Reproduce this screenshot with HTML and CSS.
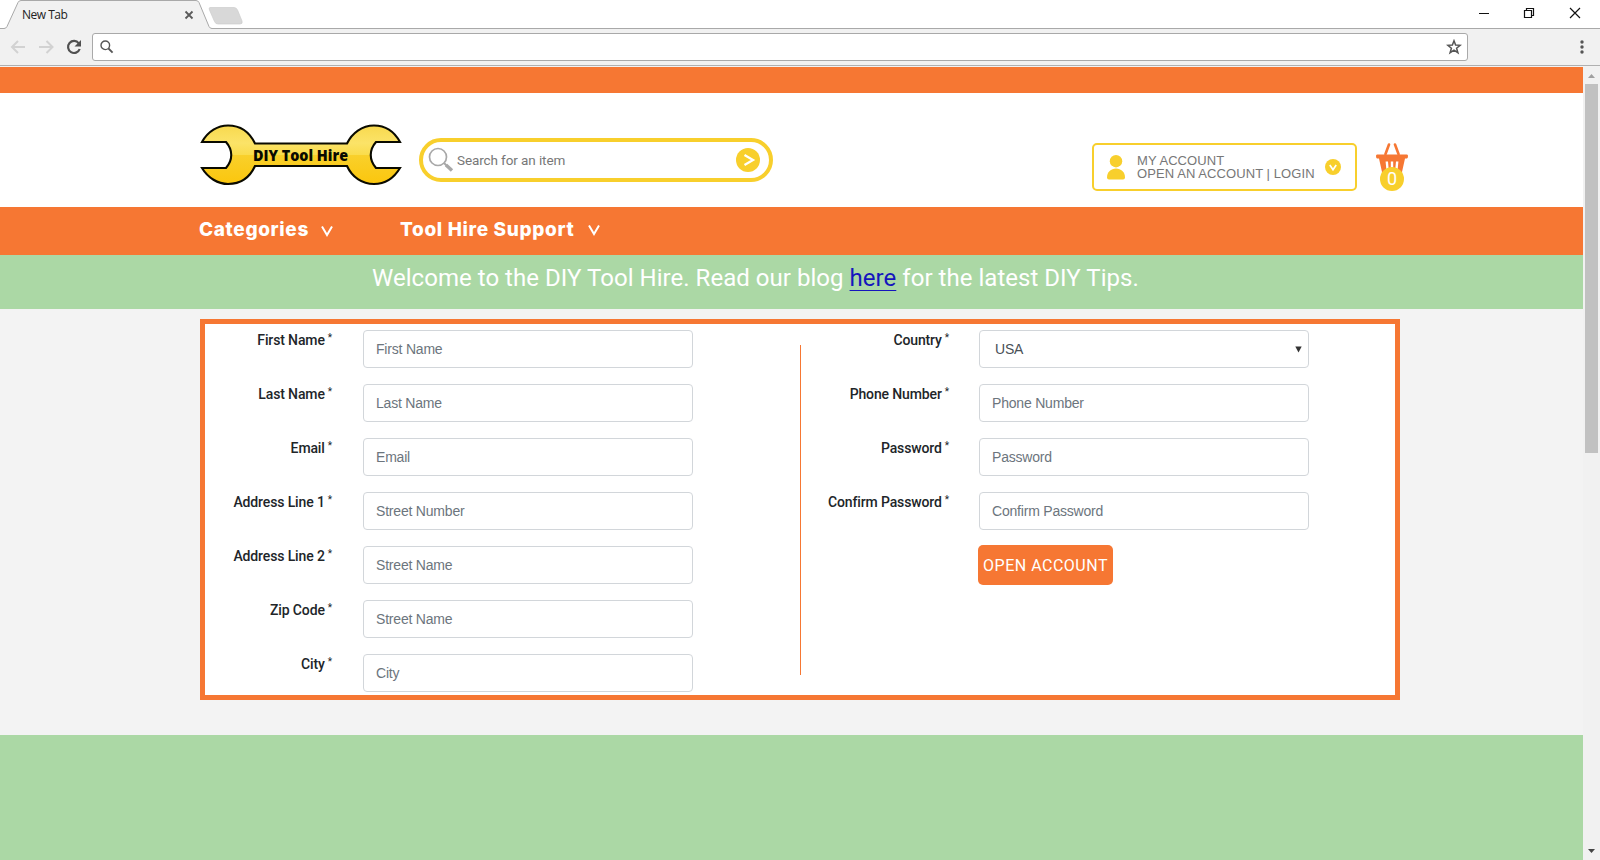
FILE: index.html
```html
<!DOCTYPE html>
<html lang="en">
<head>
<meta charset="utf-8">
<title>DIY Tool Hire</title>
<link rel="stylesheet" href="styles.css">
</head>
<body>
<div class="window">
  <header class="tabs">
    <svg class="tab-shape" width="250" height="29" viewBox="0 0 250 29">
      <path d="M0 28.5H4Q6 28.5 7 26.5L18 2.500Q19 .5 21 .5H196Q198 .5 199 2.500L209 26.500Q210 28.500 212 28.500H250V29H0Z" fill="#f1f1f1"/>
      <path d="M0 28.500H4Q6 28.500 7 26.500L18 2.500Q19 .5 21 .5H196Q198 .5 199 2.500L209 26.500Q210 28.500 212 28.500H250" fill="none" stroke="#a9a9a9"/>
      <path d="M210 7.500H234Q236.500 7.500 237.500 10L242 21Q243 24 240 24H218Q215.500 24 214.500 21.500L209.500 10Q208.500 7.500 210 7.500Z" fill="#d8d8d8" stroke="#cdcdcd" stroke-width=".7"/>
      <path d="M185.500 11.500l7 7M192.500 11.500l-7 7" stroke="#5a5a5a" stroke-width="1.800" fill="none"/>
    </svg>
    <span class="tab-title">New Tab</span>
    <svg class="win-buttons" width="110" height="28" viewBox="0 0 110 28" fill="none" stroke="#111">
      <path d="M4 13.500H14"/>
      <path d="M49.500 10.500H56.500V17.500H49.500ZM51.500 10.500V8.500H58.500V15.500H56.500" stroke-width="1.200"/>
      <path d="M95 8L105 18M105 8L95 18" stroke-width="1.200"/>
    </svg>
  </header>
  <div class="toolbar">
    <svg width="92" height="36" viewBox="0 0 92 36" fill="none">
      <path d="M25 18H12.500M18 12L12 18L18 24" stroke="#d2d2d2" stroke-width="2"/>
      <path d="M39 18H52M46.500 12L52.500 18L46.500 24" stroke="#d2d2d2" stroke-width="2"/>
      <path d="M78.800 14.300A6 6 0 1 0 79.700 20" stroke="#505050" stroke-width="2.200"/>
      <path d="M81 11V17.500H74.500Z" fill="#505050"/>
    </svg>
    <div class="address">
      <svg width="14" height="14" viewBox="0 0 14 14" fill="none" stroke="#555"><circle cx="5.300" cy="5.300" r="4.300" stroke-width="1.400"/><path d="M8.500 8.500L12.600 12.600" stroke-width="1.800"/></svg>
      <svg width="16" height="16" viewBox="0 0 16 16" fill="none" stroke="#555" stroke-width="1.500"><path d="M8 1.800L9.600 6.100L14.200 6.300L10.600 9.200L11.900 13.700L8 11.100L4.100 13.700L5.400 9.200L1.800 6.300L6.400 6.100Z"/></svg>
    </div>
    <svg class="menu" width="6" height="16" viewBox="0 0 6 16" fill="#555"><circle cx="3" cy="3" r="1.700"/><circle cx="3" cy="8" r="1.700"/><circle cx="3" cy="13" r="1.700"/></svg>
  </div>

  <div class="viewport">
    <main class="page">
      <div class="strip"></div>
      <div class="masthead">
        <svg class="logo" width="202" height="62" viewBox="0 0 202 62">
          <defs>
            <linearGradient id="gold" x1="0" y1="0" x2="0" y2="1">
              <stop offset="0" stop-color="#f8d94e"/><stop offset=".3" stop-color="#fbe368"/><stop offset=".5" stop-color="#fadc4c"/><stop offset=".51" stop-color="#f9d02b"/><stop offset="1" stop-color="#fbc60d"/>
            </linearGradient>
          </defs>
          <path d="M2 18C8 7 18 1.500 28 1.500C41 1.500 50 9 55 19.500H147C152 9 162 1.500 174 1.500C185 1.500 194 7 200 18H176C169 26 169 36 176 44H200C194 54 185 60 174 60C162 60 152 53 147 42H55C50 53 41 60 28 60C18 60 8 54 2 44H26C33 36 33 26 26 18Z" fill="url(#gold)" stroke="#0a0a00" stroke-width="2.100"/>
          <text x="53" y="37" class="logo-text" textLength="95" lengthAdjust="spacingAndGlyphs">DIY Tool Hire</text>
        </svg>
        <div class="search">
          <svg width="26" height="26" viewBox="0 0 26 26" fill="none" stroke="#a8a8a8"><circle cx="10" cy="10" r="8.500" stroke-width="1.700"/><path d="M16 16L18.500 18.500" stroke-width="2"/><path d="M18 18L24 23.500" stroke-width="3.400"/></svg>
          <span class="search-label">Search for an item</span>
          <svg width="24" height="24" viewBox="0 0 24 24"><circle cx="12" cy="12" r="12" fill="#f8cf2c"/><path d="M8.500 7L17 12L8.500 17" fill="none" stroke="#fff" stroke-width="2.300"/></svg>
        </div>
        <div class="account">
          <svg width="18" height="25" viewBox="0 0 18 25" fill="#f8cf2c"><circle cx="9" cy="6.200" r="6.200"/><path d="M0 22.500C0 17 4 13.500 9 13.500S18 17 18 22.500Q18 24.500 16 24.500H2Q0 24.500 0 22.500Z"/></svg>
          <div class="account-text"><span>MY ACCOUNT</span><span>OPEN AN ACCOUNT | LOGIN</span></div>
          <svg width="16" height="16" viewBox="0 0 16 16"><circle cx="8" cy="8" r="8" fill="#f8cf2c"/><path d="M4.800 6L8 10.800L11.200 6" fill="none" stroke="#fff" stroke-width="1.700"/></svg>
        </div>
        <svg class="basket" width="32" height="48" viewBox="0 0 32 48">
          <path d="M13 1.500L9.500 11M19 1.500L22.500 11" stroke="#f67733" stroke-width="2.600" stroke-linecap="round" fill="none"/>
          <path d="M1 11.500H31Q32 11.500 32 13Q32 15 31 15.500H29L26 29H6L3 15.500H1Q0 15 0 13Q0 11.500 1 11.500Z" fill="#f67733"/>
          <path d="M10.800 18.500L11.500 26M16 18.500V26M21.200 18.500L20.500 26" stroke="#fff" stroke-width="2.400"/>
          <circle cx="16" cy="36" r="12" fill="#f8cf2c"/>
          <text x="16" y="42" class="count" text-anchor="middle">0</text>
        </svg>
      </div>
      <nav class="nav">
        <span class="nav-a">Categories</span>
        <svg class="chev-a" width="12" height="12" viewBox="0 0 12 12"><path d="M1 1.500L6 10L11 1.500" fill="none" stroke="#fff" stroke-width="2"/></svg>
        <span class="nav-b">Tool Hire Support</span>
        <svg class="chev-b" width="12" height="12" viewBox="0 0 12 12"><path d="M1 1.500L6 10L11 1.500" fill="none" stroke="#fff" stroke-width="2"/></svg>
      </nav>
      <div class="welcome"><span>Welcome to the DIY Tool Hire. Read our blog <a href="#">here</a> for the latest DIY Tips.</span></div>
      <section class="content">
        <form class="panel">
          <div class="col left">
            <div class="row"><label>First Name <sup>*</sup></label><input placeholder="First Name"></div>
            <div class="row"><label>Last Name <sup>*</sup></label><input placeholder="Last Name"></div>
            <div class="row"><label>Email <sup>*</sup></label><input placeholder="Email"></div>
            <div class="row"><label>Address Line 1 <sup>*</sup></label><input placeholder="Street Number"></div>
            <div class="row"><label>Address Line 2 <sup>*</sup></label><input placeholder="Street Name"></div>
            <div class="row"><label>Zip Code <sup>*</sup></label><input placeholder="Street Name"></div>
            <div class="row"><label>City <sup>*</sup></label><input placeholder="City"></div>
          </div>
          <div class="divider"></div>
          <div class="col right">
            <div class="row"><label>Country <sup>*</sup></label><div class="select"><span>USA</span><svg width="7" height="7" viewBox="0 0 7 7"><path d="M.3 .5H6.700L3.500 6.500Z" fill="#333"/></svg></div></div>
            <div class="row"><label>Phone Number <sup>*</sup></label><input placeholder="Phone Number"></div>
            <div class="row"><label>Password <sup>*</sup></label><input placeholder="Password"></div>
            <div class="row"><label>Confirm Password <sup>*</sup></label><input placeholder="Confirm Password"></div>
            <button type="button" class="open">OPEN ACCOUNT</button>
          </div>
        </form>
      </section>
    </main>
    <div class="scrollbar">
      <svg width="7" height="4" viewBox="0 0 7 4"><path d="M0 4L3.500 0L7 4Z" fill="#a0a0a0"/></svg>
      <div class="thumb"></div>
      <svg class="down" width="7" height="4" viewBox="0 0 7 4"><path d="M0 0L3.500 4L7 0Z" fill="#444"/></svg>
    </div>
  </div>
</div>
</body>
</html>
```
FILE: styles.css
```css
* { box-sizing: border-box; }
body { margin: 0; font-family: Roboto, "Liberation Sans", sans-serif; }
svg { display: block; flex: none; }
.window { width: 1600px; height: 860px; overflow: hidden; display: flex; flex-direction: column; }

.tabs { height: 29px; flex: none; display: flex; justify-content: space-between; position: relative; background: #fff; border-bottom: 1px solid #a9a9a9; }
.tab-shape { height: 29px; margin-bottom: -1px; position: relative; }
.tab-title { position: absolute; left: 22px; top: 6px; font: 12px/17px "Open Sans", "Noto Sans", sans-serif; letter-spacing: -.5px; color: #222; }
.win-buttons { margin-right: 15px; }
.toolbar { height: 37px; flex: none; display: flex; background: #f1f1f1; border-bottom: 1px solid #b0b0b0; }
.address { width: 1376px; height: 28px; margin-top: 4px; padding: 0 5px 0 7px; background: #fff; border: 1px solid #a9a9a9; border-radius: 3px; display: flex; align-items: center; justify-content: space-between; }
.menu { margin: 10px 0 0 111px; }

.viewport { flex: 1; display: flex; padding-top: 1px; background: #f2f2f2; }
.page { width: 1583px; display: flex; flex-direction: column; background: #abd8a5; }
.strip { height: 26px; background: #f67733; }
.masthead { height: 114px; background: #fff; display: flex; align-items: flex-start; padding-left: 200px; }
.logo { margin-top: 31px; }
.logo-text { font: 800 16px "Open Sans", sans-serif; fill: #0a0a00; }
.search { width: 354px; height: 44px; margin: 45px 0 0 17px; padding: 0 9px 0 5px; border: 4px solid #f8cf2c; border-radius: 22px; display: flex; align-items: center; }
.search-label { flex: 1; margin-left: 3px; font-size: 13.5px; letter-spacing: -.1px; color: #777; white-space: nowrap; }
.account { width: 265px; height: 48px; margin: 50px 0 0 319px; padding: 0 14px 0 13px; border: 2px solid #f8cf2c; border-radius: 5px; display: flex; align-items: center; }
.account-text { flex: 1; display: flex; flex-direction: column; margin-left: 12px; font: 13px/13px "Liberation Sans", sans-serif; letter-spacing: .08px; color: #777; white-space: nowrap; }
.basket { margin: 50px 0 0 19px; }
.count { font: 18px Roboto, sans-serif; fill: #fff; }

.nav { height: 48px; background: #f67733; display: flex; padding-left: 199px; color: #fff; font: 800 19px/45px Inter, sans-serif; letter-spacing: .65px; white-space: nowrap; }
.nav-a { width: 122px; }
.nav-b { width: 188px; margin-left: 67px; }
.chev-a { margin-top: 18px; }
.chev-b { margin-top: 17px; }
.welcome { height: 54px; background: #abd8a5; padding-left: 372px; font-size: 24px; line-height: 47px; letter-spacing: .035px; color: #fff; white-space: nowrap; }
.welcome a { color: #1515bd; text-decoration-thickness: 1px; text-underline-offset: 4px; }

.content { height: 426px; background: #f3f3f3; padding: 10px 0 0 200px; }
.panel { width: 1200px; height: 381px; border: 5px solid #f67733; background: #fff; display: flex; }
.col { padding-top: 6px; display: flex; flex-direction: column; gap: 16px; }
.left { width: 595px; }
.right { width: 594px; padding-left: 20px; }
.divider { width: 1px; height: 330px; margin-top: 21px; background: #f67733; }
.row { height: 38px; display: flex; }
label { width: 127px; padding-top: 2px; margin-right: 31px; text-align: right; font-weight: 500; font-size: 14px; line-height: 16px; letter-spacing: -.13px; color: #212529; white-space: nowrap; }
.right label { width: 128px; margin-right: 30px; }
sup { font-size: 10px; line-height: 0; vertical-align: 4px; font-weight: 400; margin-left: -.3px; }
input, .select { width: 330px; height: 38px; padding: 0 12px; border: 1px solid #d2d6da; border-radius: 4px; background: #fff; font: 14px "Liberation Sans", Arial, sans-serif; letter-spacing: -.2px; color: #495057; }
input::placeholder { color: #6c757d; opacity: 1; }
.select { display: flex; align-items: center; justify-content: space-between; padding: 0 6px 0 15px; }
.open { width: 135px; height: 40px; margin: -1px 0 0 157px; padding: 0; border: 0; border-radius: 5px; background: #f67733; color: #fff; font: 16px Roboto, sans-serif; letter-spacing: .5px; white-space: nowrap; }

.scrollbar { width: 17px; display: flex; flex-direction: column; align-items: center; padding-top: 7px; background: #f1f1f1; }
.thumb { width: 13px; height: 369px; margin-top: 6px; background: #c1c1c1; }
.down { margin-top: auto; margin-bottom: 7px; }
```
